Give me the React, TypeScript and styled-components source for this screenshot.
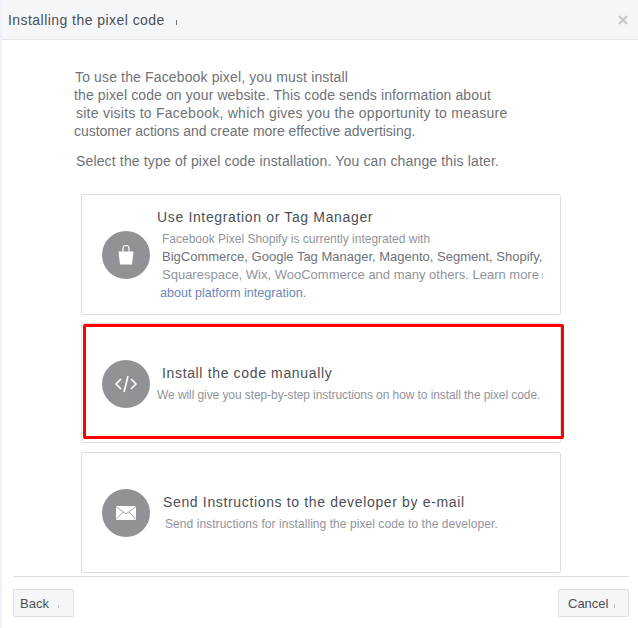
import { createGlobalStyle, styled } from 'styled-components';

const GlobalStyle = createGlobalStyle`
  html, body {
    margin: 0;
    padding: 0;
    background: #fff;
  }

  body {
    font-family: 'Liberation Sans', Arial, sans-serif;
  }
`;

const Dialog = styled.div`
  width: 638px;
  height: 628px;
  box-sizing: border-box;
  border-left: 2px solid #eef3fb;
  display: flex;
  flex-direction: column;
  overflow: hidden;
`;

const Header = styled.header`
  height: 40px;
  box-sizing: border-box;
  flex: none;
  display: flex;
  align-items: center;
  justify-content: space-between;
  padding: 0 10px 0 6px;
  background: #f5f6f7;
  border-bottom: 1px solid #e5e5e5;
`;

const Title = styled.h1`
  margin: 0;
  font-size: 14px;
  font-weight: 400;
  letter-spacing: 0.45px;
  color: #4b4f56;
`;

const Tick = styled.i<{ $gap: number; $height: number; $color: string }>`
  display: inline-block;
  width: 1px;
  height: ${props => props.$height}px;
  margin-left: ${props => props.$gap}px;
  background: ${props => props.$color};
`;

const Close = styled.span`
  display: flex;
  color: #c4c6ca;
`;

const Body = styled.main`
  flex: 1;
  min-height: 0;
  padding: 28px 0 0 72px;
  display: flex;
  flex-direction: column;
`;

const Intro = styled.div`
  font-size: 14px;
  line-height: 18px;
  color: #6f7277;
`;

const IntroLine = styled.div<{ $indent: number; $spacing: number }>`
  margin-left: ${props => props.$indent}px;
  letter-spacing: ${props => props.$spacing}px;
  white-space: nowrap;
`;

const Select = styled.p`
  margin: 12px 0 0 2px;
  font-size: 14px;
  line-height: 18px;
  letter-spacing: 0.15px;
  color: #6f7277;
`;

const Cards = styled.div`
  margin: 24px 0 0 7px;
  width: 480px;
  display: flex;
  flex-direction: column;
`;

const Card = styled.section<{ $height: number; $gap: number; $top?: number }>`
  position: relative;
  box-sizing: border-box;
  height: ${props => props.$height}px;
  margin-bottom: ${props => props.$gap}px;
  padding: ${props => props.$top ?? 0}px 0 0 20px;
  display: flex;
  align-items: center;
  gap: 7px;
  border: 1px solid #dddfe2;
  border-radius: 2px;
`;

const Badge = styled.div`
  flex: none;
  width: 48px;
  height: 48px;
  border-radius: 50%;
  background: #919296;
  display: flex;
  align-items: center;
  justify-content: center;
`;

const CardText = styled.div`
  min-width: 0;
`;

const CardTitle = styled.h2<{ $indent: number }>`
  margin: 0 0 0 ${props => props.$indent}px;
  font-size: 14px;
  font-weight: 400;
  line-height: 18px;
  letter-spacing: 0.65px;
  color: #4b4f56;
`;

const CardCopy = styled.p<{ $indent: number; $spacing?: number }>`
  margin: 4px 0 0 ${props => props.$indent}px;
  font-size: 12px;
  line-height: 18px;
  letter-spacing: ${props => props.$spacing ?? 0}px;
  color: #90949c;
  white-space: nowrap;
`;

const BigCopy = styled.span<{ $dark?: boolean }>`
  font-size: 13px;
  color: ${props => (props.$dark ? '#6f7277' : '#90949c')};
`;

const PlatformLink = styled.a`
  display: block;
  margin-left: -2px;
  font-size: 12.6px;
  color: #6d88b9;
`;

const Highlight = styled.div`
  position: absolute;
  top: 0;
  left: 1px;
  width: 481px;
  height: 115px;
  box-sizing: border-box;
  border: 3px solid #ff0000;
  border-radius: 2px;
`;

const Footer = styled.footer`
  flex: none;
  box-sizing: border-box;
  margin: 0 9px 0 11px;
  height: 52px;
  border-top: 1px solid #dddfe2;
  display: flex;
  align-items: flex-start;
  justify-content: space-between;
  padding-top: 12px;
`;

const Button = styled.button<{ $width: number; $pad: number }>`
  box-sizing: border-box;
  width: ${props => props.$width}px;
  height: 28px;
  padding: 0 0 0 ${props => props.$pad}px;
  text-align: left;
  font-family: inherit;
  font-size: 13px;
  color: #4b4f56;
  background: #f5f6f7;
  border: 1px solid #dddfe2;
  border-radius: 2px;
`;

export default function App() {
  return (
    <>
      <GlobalStyle />
      <Dialog>
        <Header>
          <Title>
            Installing the pixel code
            <Tick $gap={11} $height={5} $color="#6f7277" />
          </Title>
          <Close>
            <svg width="10" height="10" viewBox="0 0 10 10" fill="none" stroke="currentColor" strokeWidth="2">
              <path d="M1 1l8 8M9 1l-8 8" />
            </svg>
          </Close>
        </Header>
        <Body>
          <Intro>
            <IntroLine $indent={1} $spacing={0.14}>To use the Facebook pixel, you must install</IntroLine>
            <IntroLine $indent={0} $spacing={0.11}>the pixel code on your website. This code sends information about</IntroLine>
            <IntroLine $indent={2} $spacing={0.25}>site visits to Facebook, which gives you the opportunity to measure</IntroLine>
            <IntroLine $indent={0} $spacing={-0.03}>customer actions and create more effective advertising.</IntroLine>
          </Intro>
          <Select>Select the type of pixel code installation. You can change this later.</Select>
          <Cards>
            <Card $height={121} $gap={8}>
              <Badge>
                <svg width="16" height="20" viewBox="0 0 16 20" fill="none">
                  <path d="M0.5 6.5h15l-1.5 13H2z" fill="#fff" />
                  <path d="M5 8V3.5a3 3 0 0 1 6 0V8" stroke="#fff" strokeWidth="1.2" />
                </svg>
              </Badge>
              <CardText>
                <CardTitle $indent={0}>Use Integration or Tag Manager</CardTitle>
                <CardCopy $indent={5}>
                  Facebook Pixel Shopify is currently integrated with
                  <br />
                  <BigCopy $dark>BigCommerce, Google Tag Manager, Magento, Segment, Shopify,</BigCopy>
                  <br />
                  <BigCopy>Squarespace, Wix, WooCommerce and many others. Learn more</BigCopy>
                  <Tick $gap={3} $height={6} $color="#c3d0e6" />
                  <PlatformLink>about platform integration.</PlatformLink>
                </CardCopy>
              </CardText>
            </Card>
            <Card $height={120} $gap={9} $top={2}>
              <Badge>
                <svg width="24" height="20" viewBox="0 0 24 20" fill="none" stroke="#fff" strokeWidth="1.6">
                  <path d="M7 5l-5 5 5 5M17 5l5 5-5 5M14 2l-4 16" />
                </svg>
              </Badge>
              <CardText>
                <CardTitle $indent={5}>Install the code manually</CardTitle>
                <CardCopy $indent={0} $spacing={-0.08}>We will give you step-by-step instructions on how to install the pixel code.</CardCopy>
              </CardText>
              <Highlight />
            </Card>
            <Card $height={121} $gap={0}>
              <Badge>
                <svg width="20" height="14" viewBox="0 0 20 14">
                  <rect width="20" height="14" fill="#fff" />
                  <path d="M0 0.5l10 7.5 10-7.5M0 13.5l7-7.5M20 13.5l-7-7.5" fill="none" stroke="#919296" strokeWidth="0.8" />
                </svg>
              </Badge>
              <CardText>
                <CardTitle $indent={6}>Send Instructions to the developer by e-mail</CardTitle>
                <CardCopy $indent={8} $spacing={0.06}>Send instructions for installing the pixel code to the developer.</CardCopy>
              </CardText>
            </Card>
          </Cards>
        </Body>
        <Footer>
          <Button $width={61} $pad={6}>
            Back
            <Tick $gap={9} $height={3} $color="#c4c6ca" />
          </Button>
          <Button $width={71} $pad={9}>
            Cancel
            <Tick $gap={6} $height={4} $color="#c4c6ca" />
          </Button>
        </Footer>
      </Dialog>
    </>
  );
}
